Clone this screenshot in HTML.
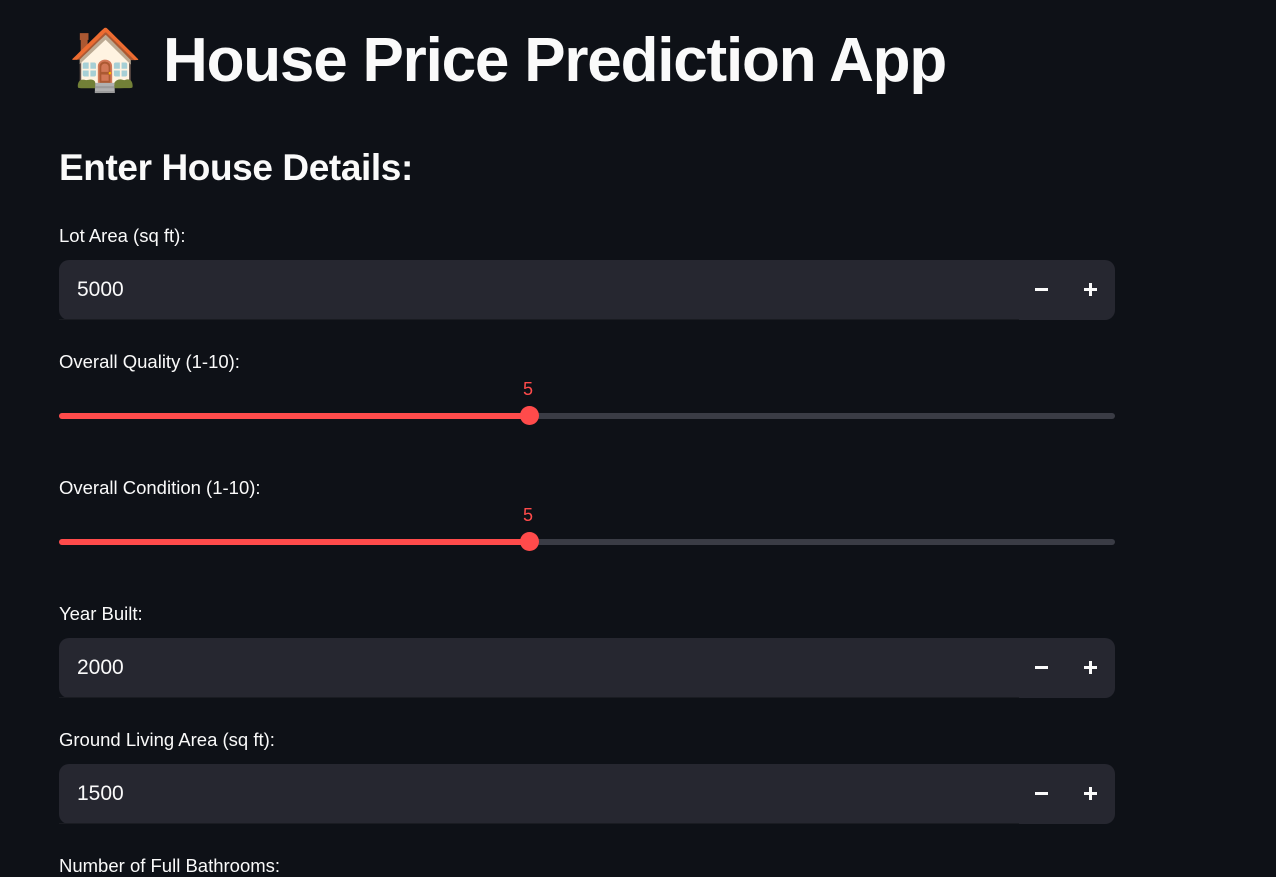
<!DOCTYPE html>
<html><head><meta charset="utf-8"><style>
body{margin:0;width:1276px;height:868px;background:#0e1117;overflow:hidden;font-family:"Liberation Sans",sans-serif;color:#fafafa;position:relative}
.a{position:absolute;white-space:nowrap}
.lbl{font-size:18.5px;left:59px}
.inp{position:absolute;left:59px;width:1056px;height:60px;background:#262730;border-radius:10px}
.inp .v{position:absolute;left:18px;top:18px;font-size:21px}
.inp .m{position:absolute;left:976px;top:28px;width:13px;height:3px;background:#fafafa}
.inp .p1{position:absolute;left:1025px;top:28px;width:13px;height:3px;background:#fafafa}
.inp .p2{position:absolute;left:1030px;top:23px;width:3px;height:13px;background:#fafafa}
.inp .ul{position:absolute;left:0;bottom:0;width:960px;height:1px;background:#1a1c22}
.tr{position:absolute;left:59px;width:1056px;height:6px;background:#3a3c45;border-radius:3px}
.tr .f{position:absolute;left:0;top:0;width:470px;height:6px;background:#ff4b4b;border-radius:3px}
.tr .t{position:absolute;left:461px;top:-7px;width:19px;height:19px;border-radius:50%;background:#ff4b4b}
.sv{position:absolute;left:523px;color:#ff4b4b;font-size:18px}
</style></head><body>
<div class="a" style="left:68px;top:24px;font-size:60px;line-height:72px">🏠</div>
<div class="a" style="left:163px;top:25px;font-size:62px;font-weight:bold;line-height:72px;letter-spacing:-1.2px">House Price Prediction App</div>
<div class="a" style="left:59px;top:147px;font-size:37px;font-weight:bold;letter-spacing:-0.4px">Enter House Details:</div>

<div class="a lbl" style="top:225px">Lot Area (sq ft):</div>
<div class="inp" style="top:260px"><span class="v">5000</span><i class="m"></i><i class="p1"></i><i class="p2"></i><i class="ul"></i></div>

<div class="a lbl" style="top:351px">Overall Quality (1-10):</div>
<div class="sv" style="top:379px">5</div>
<div class="tr" style="top:413px"><i class="f"></i><i class="t"></i></div>

<div class="a lbl" style="top:477px">Overall Condition (1-10):</div>
<div class="sv" style="top:505px">5</div>
<div class="tr" style="top:539px"><i class="f"></i><i class="t"></i></div>

<div class="a lbl" style="top:603px">Year Built:</div>
<div class="inp" style="top:638px"><span class="v">2000</span><i class="m"></i><i class="p1"></i><i class="p2"></i><i class="ul"></i></div>

<div class="a lbl" style="top:729px">Ground Living Area (sq ft):</div>
<div class="inp" style="top:764px"><span class="v">1500</span><i class="m"></i><i class="p1"></i><i class="p2"></i><i class="ul"></i></div>

<div class="a lbl" style="top:855px">Number of Full Bathrooms:</div>
</body></html>
